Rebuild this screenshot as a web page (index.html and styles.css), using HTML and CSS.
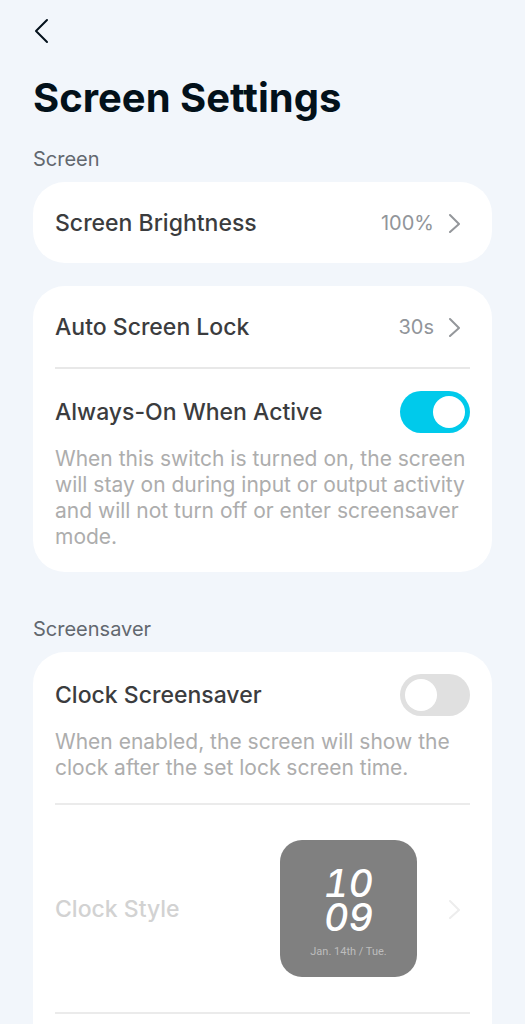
FILE: index.html
```html
<!DOCTYPE html>
<html lang="en">
<head>
  <meta charset="utf-8">
  <title>Screen Settings</title>
  <meta name="viewport" content="width=device-width, initial-scale=1">
  <link rel="stylesheet" href="styles.css">
</head>

<body>
<header class="header">
  <button class="back" type="button" aria-label="Back">
    <svg width="16" height="26" viewBox="0 0 16 26"><path d="M14 2L3 13L14 24"/></svg>
  </button>
  <h1 class="title">Screen Settings</h1>
</header>

<main>
  <h2 class="section">Screen</h2>

  <div class="card">
    <button class="row" type="button">
      <span class="name">Screen Brightness</span>
      <span class="value">100%</span>
      <svg class="chevron" width="16" height="20" viewBox="0 0 16 20"><path d="M4 2L13 11L4 19"/></svg>
    </button>
  </div>

  <div class="card">
    <button class="row" type="button">
      <span class="name">Auto Screen Lock</span>
      <span class="value">30s</span>
      <svg class="chevron" width="16" height="20" viewBox="0 0 16 20"><path d="M4 2L13 11L4 19"/></svg>
    </button>
    <div class="setting">
      <div class="switch-row">
        <label class="name" for="always-on">Always-On When Active</label>
        <input class="switch" id="always-on" type="checkbox" checked>
      </div>
      <p class="hint">When this switch is turned on, the screen will stay on during input or output activity and will not turn off or enter screensaver mode.</p>
    </div>
  </div>

  <h2 class="section section-next">Screensaver</h2>

  <div class="card card-last">
    <div class="setting">
      <div class="switch-row">
        <label class="name" for="clock-saver">Clock Screensaver</label>
        <input class="switch" id="clock-saver" type="checkbox">
      </div>
      <p class="hint">When enabled, the screen will show the clock after the set lock screen time.</p>
    </div>
    <button class="row clock-row" type="button" disabled>
      <span class="name">Clock Style</span>
      <span class="clock">
        <span class="digits">10<br>09</span>
        <span class="date">Jan. 14th / Tue.</span>
      </span>
      <svg class="chevron" width="16" height="20" viewBox="0 0 16 20"><path d="M4 2L13 11L4 19"/></svg>
    </button>
  </div>
</main>

</body>
</html>
```

FILE: styles.css
```css
* {
  box-sizing: border-box;
}

body {
  margin: 0;
  padding: 16px 33px 32px;
  background: #f2f6fb;
  color: #3b3c3e;
  font-family: Inter, "Liberation Sans", sans-serif;
}

button {
  margin: 0;
  border: 0;
  background: none;
  color: inherit;
  font: inherit;
  text-align: left;
}

svg {
  display: block;
  fill: none;
  stroke-linecap: round;
  stroke-linejoin: round;
}

.back {
  display: block;
  padding: 2px 0;
  stroke: #04121c;
  stroke-width: 2;
}

.title {
  margin: 28px 0 0;
  color: #03111a;
  font-size: 40px;
  line-height: 48px;
  font-weight: 700;
}

.section {
  margin: 25px 0 11px;
  color: #62686f;
  font-size: 20px;
  line-height: 24px;
  font-weight: 400;
}

.section-next {
  margin-top: 45px;
}

.card {
  margin-bottom: 23px;
  padding: 0 22px;
  border-radius: 32px;
  background: #fff;
}

.card-last {
  padding-bottom: 64px;
}

.row {
  display: flex;
  align-items: center;
  width: 100%;
  min-height: 81px;
  padding: 0;
}

.name {
  flex: 1;
  font-size: 23px;
  line-height: 28px;
  font-weight: 500;
}

.value {
  margin-right: 12px;
  color: #91959a;
  font-size: 20px;
  line-height: 28px;
}

.chevron {
  margin-right: 8px;
  stroke: #94979b;
  stroke-width: 2;
}

.setting {
  padding: 22px 0;
}

.row + .setting {
  border-top: 2px solid #e8e8e8;
}

.switch-row {
  display: flex;
  align-items: center;
}

.switch {
  appearance: none;
  width: 70px;
  height: 42px;
  margin: 0;
  padding: 5px;
  border-radius: 21px;
  background: #e0e0e0;
}

.switch::before {
  content: "";
  display: block;
  width: 32px;
  height: 32px;
  border-radius: 50%;
  background: #fff;
}

.switch:checked {
  background: #00caeb;
}

.switch:checked::before {
  margin-left: auto;
}

.hint {
  margin: 13px 0 0;
  color: #adadad;
  font-size: 21px;
  line-height: 26px;
}

.clock-row {
  padding: 35px 0;
  border-top: 2px solid #ebebeb;
  border-bottom: 2px solid #ebebeb;
  color: #d2d2d2;
}

.clock-row .chevron {
  stroke: #ededed;
}

.clock {
  display: flex;
  flex-direction: column;
  align-items: center;
  width: 137px;
  height: 137px;
  margin-right: 29px;
  padding-top: 26px;
  border-radius: 22px;
  background: #808080;
  color: #fff;
}

.digits {
  font-size: 38px;
  line-height: 34px;
  font-style: italic;
  font-weight: 500;
  font-variant-numeric: tabular-nums;
}

.date {
  margin-top: 10px;
  color: #bdbdbd;
  font-family: Roboto, sans-serif;
  font-size: 11px;
  line-height: 16px;
}
```
